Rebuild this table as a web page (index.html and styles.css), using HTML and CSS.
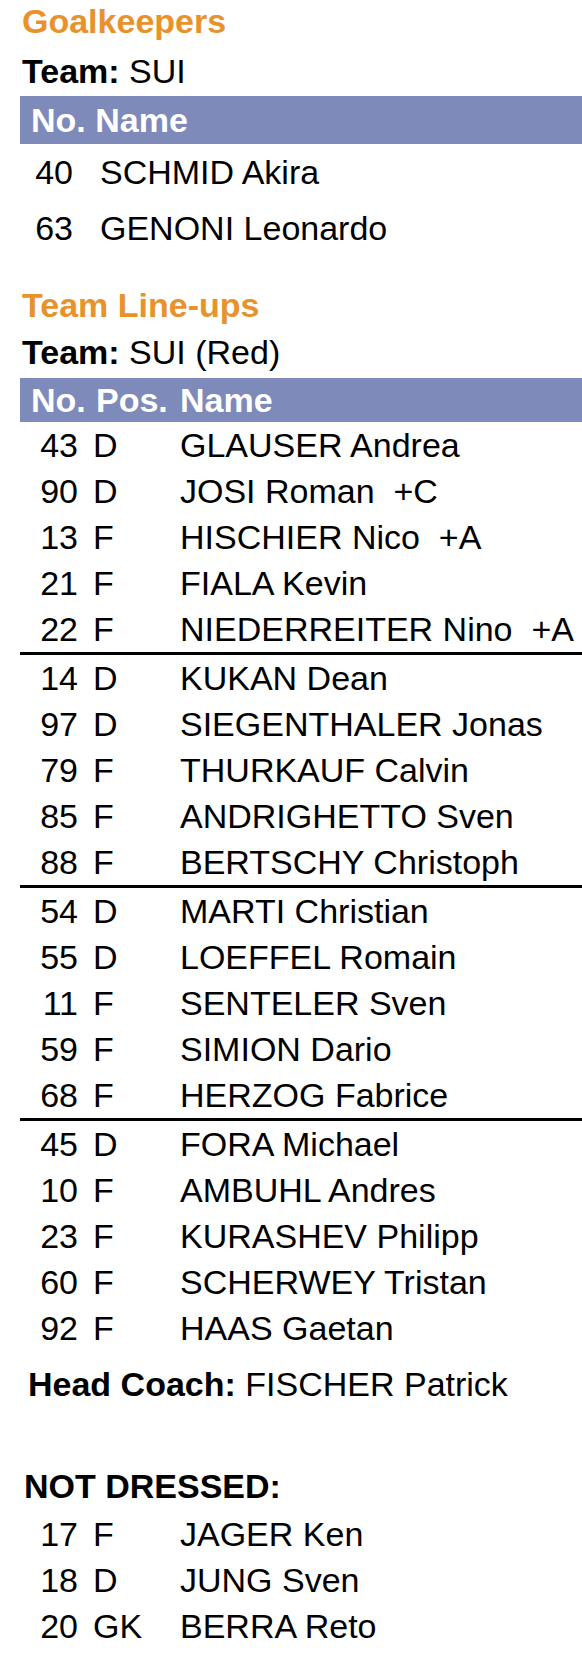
FILE: index.html
```html
<!DOCTYPE html>
<html lang="en">
<head>
<meta charset="utf-8">
<title>SUI Line-ups</title>
<link rel="stylesheet" href="styles.css">
</head>
<body>
<div class="page">
  <div class="sec-title first">Goalkeepers</div>
  <div class="team"><b>Team:</b> SUI</div>
  <div class="thead gk-head">No. Name</div>
  <div class="gk-row"><span class="num">40</span><span class="name">SCHMID Akira</span></div>
  <div class="gk-row"><span class="num">63</span><span class="name">GENONI Leonardo</span></div>

  <div class="sec-title lineups">Team Line-ups</div>
  <div class="team small-gap"><b>Team:</b> SUI (Red)</div>
  <div class="thead lu-head"><span class="h-no">No.</span><span class="h-pos">Pos.</span><span class="h-name">Name</span></div>

  <div class="group">
    <div class="lu-row"><span class="num">43</span><span class="pos">D</span><span class="name">GLAUSER Andrea</span></div>
    <div class="lu-row"><span class="num">90</span><span class="pos">D</span><span class="name">JOSI Roman &nbsp;+C</span></div>
    <div class="lu-row"><span class="num">13</span><span class="pos">F</span><span class="name">HISCHIER Nico &nbsp;+A</span></div>
    <div class="lu-row"><span class="num">21</span><span class="pos">F</span><span class="name">FIALA Kevin</span></div>
    <div class="lu-row"><span class="num">22</span><span class="pos">F</span><span class="name">NIEDERREITER Nino &nbsp;+A</span></div>
  </div>
  <div class="group">
    <div class="lu-row"><span class="num">14</span><span class="pos">D</span><span class="name">KUKAN Dean</span></div>
    <div class="lu-row"><span class="num">97</span><span class="pos">D</span><span class="name">SIEGENTHALER Jonas</span></div>
    <div class="lu-row"><span class="num">79</span><span class="pos">F</span><span class="name">THURKAUF Calvin</span></div>
    <div class="lu-row"><span class="num">85</span><span class="pos">F</span><span class="name">ANDRIGHETTO Sven</span></div>
    <div class="lu-row"><span class="num">88</span><span class="pos">F</span><span class="name">BERTSCHY Christoph</span></div>
  </div>
  <div class="group">
    <div class="lu-row"><span class="num">54</span><span class="pos">D</span><span class="name">MARTI Christian</span></div>
    <div class="lu-row"><span class="num">55</span><span class="pos">D</span><span class="name">LOEFFEL Romain</span></div>
    <div class="lu-row"><span class="num">11</span><span class="pos">F</span><span class="name">SENTELER Sven</span></div>
    <div class="lu-row"><span class="num">59</span><span class="pos">F</span><span class="name">SIMION Dario</span></div>
    <div class="lu-row"><span class="num">68</span><span class="pos">F</span><span class="name">HERZOG Fabrice</span></div>
  </div>
  <div class="group">
    <div class="lu-row"><span class="num">45</span><span class="pos">D</span><span class="name">FORA Michael</span></div>
    <div class="lu-row"><span class="num">10</span><span class="pos">F</span><span class="name">AMBUHL Andres</span></div>
    <div class="lu-row"><span class="num">23</span><span class="pos">F</span><span class="name">KURASHEV Philipp</span></div>
    <div class="lu-row"><span class="num">60</span><span class="pos">F</span><span class="name">SCHERWEY Tristan</span></div>
    <div class="lu-row"><span class="num">92</span><span class="pos">F</span><span class="name">HAAS Gaetan</span></div>
  </div>

  <div class="coach"><b>Head Coach:</b> FISCHER Patrick</div>

  <div class="nd-title">NOT DRESSED:</div>
  <div class="nd-list">
    <div class="lu-row"><span class="num">17</span><span class="pos">F</span><span class="name">JAGER Ken</span></div>
    <div class="lu-row"><span class="num">18</span><span class="pos">D</span><span class="name">JUNG Sven</span></div>
    <div class="lu-row"><span class="num">20</span><span class="pos">GK</span><span class="name">BERRA Reto</span></div>
  </div>
</div>
</body>
</html>
```

FILE: styles.css
```css
html, body {
  margin: 0;
  padding: 0;
  background: #ffffff;
}

body {
  font-family: "Liberation Sans", Arial, sans-serif;
  font-size: 34px;
  color: #000000;
}

.page {
  width: 562px;
  padding-left: 20px;
  overflow: hidden;
}

.sec-title {
  color: #e8922c;
  font-weight: bold;
  line-height: 42px;
  height: 42px;
  padding-left: 2px;
  white-space: nowrap;
}

.sec-title.lineups {
  margin-top: 28px;
}

.team {
  margin-top: 8px;
  line-height: 42px;
  height: 42px;
  padding-left: 2px;
  white-space: nowrap;
}

.team.small-gap {
  margin-top: 5px;
}

.team b,
.coach b {
  font-weight: bold;
}

.thead {
  background: #7e8aba;
  color: #ffffff;
  font-weight: bold;
  white-space: nowrap;
}

.gk-head {
  margin-top: 4px;
  height: 48px;
  line-height: 48px;
  padding-left: 11px;
}

.gk-row {
  display: grid;
  grid-template-columns: 53px 1fr;
  column-gap: 27px;
  height: 56px;
  line-height: 56px;
  white-space: nowrap;
}

.num {
  text-align: right;
}

.lu-head {
  margin-top: 5px;
  height: 44px;
  line-height: 44px;
  display: grid;
  grid-template-columns: 58px 102px 1fr;
}

.h-no {
  padding-left: 11px;
}

.h-pos {
  padding-left: 18px;
}

.lu-row {
  display: grid;
  grid-template-columns: 58px 102px 1fr;
  height: 46px;
  line-height: 46px;
  white-space: nowrap;
}

.lu-row .pos {
  padding-left: 15px;
}

.group + .group {
  border-top: 3px solid #000000;
}

.coach {
  margin-top: 12px;
  height: 42px;
  line-height: 42px;
  padding-left: 8px;
  white-space: nowrap;
}

.nd-title {
  margin-top: 60px;
  height: 42px;
  line-height: 42px;
  padding-left: 4px;
  font-weight: bold;
  white-space: nowrap;
}

.nd-list {
  margin-top: 4px;
}
```
